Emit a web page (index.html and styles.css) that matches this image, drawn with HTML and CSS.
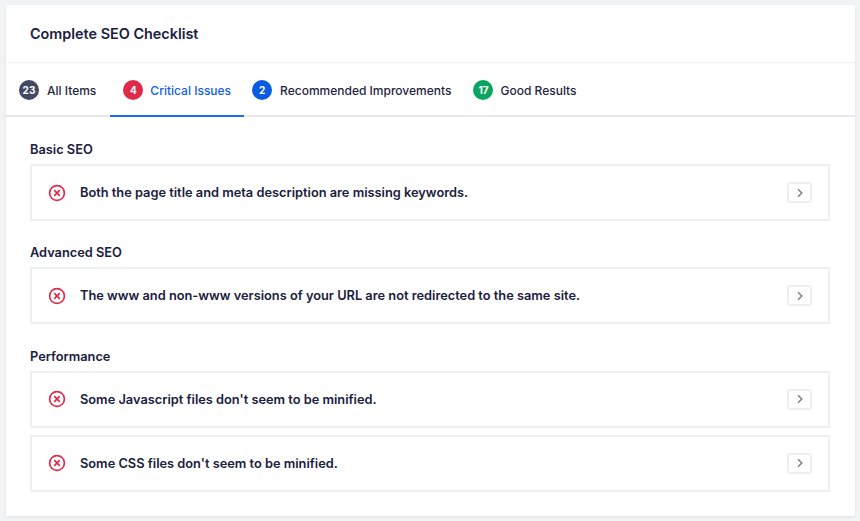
FILE: index.html
```html
<!DOCTYPE html>
<html lang="en">
<head>
<meta charset="utf-8">
<title>Complete SEO Checklist</title>
<link rel="stylesheet" href="styles.css">
</head>
<body>
<svg class="defs" width="0" height="0" aria-hidden="true">
  <symbol id="x-circle" viewBox="0 0 18 18">
    <circle cx="9" cy="9" r="7.4" fill="none" stroke="#df2a4a" stroke-width="1.7"/>
    <path d="M6.7 6.7l4.6 4.6M11.3 6.7l-4.6 4.6" fill="none" stroke="#df2a4a" stroke-width="1.7" stroke-linecap="round"/>
  </symbol>
  <symbol id="chev" viewBox="0 0 8 10">
    <path d="M2 1.2L5.8 5 2 8.8" fill="none" stroke="#7b7f8f" stroke-width="1.5"/>
  </symbol>
</svg>
<main class="card">
  <header class="card-head"><h1>Complete SEO Checklist</h1></header>
  <nav class="tabs">
    <div class="tab"><span class="badge badge-dark">23</span>All Items</div>
    <div class="tab tab-active"><span class="badge badge-red">4</span>Critical Issues</div>
    <div class="tab"><span class="badge badge-blue">2</span>Recommended Improvements</div>
    <div class="tab tab-last"><span class="badge badge-green">17</span>Good Results</div>
  </nav>
  <div class="content">
    <section class="group">
      <h2>Basic SEO</h2>
      <div class="row">
        <svg class="icon"><use href="#x-circle"/></svg>
        <span class="msg">Both the page title and meta description are missing keywords.</span>
        <span class="more"><svg class="chev"><use href="#chev"/></svg></span>
      </div>
    </section>
    <section class="group">
      <h2>Advanced SEO</h2>
      <div class="row">
        <svg class="icon"><use href="#x-circle"/></svg>
        <span class="msg">The www and non-www versions of your URL are not redirected to the same site.</span>
        <span class="more"><svg class="chev"><use href="#chev"/></svg></span>
      </div>
    </section>
    <section class="group">
      <h2>Performance</h2>
      <div class="row">
        <svg class="icon"><use href="#x-circle"/></svg>
        <span class="msg">Some Javascript files don't seem to be minified.</span>
        <span class="more"><svg class="chev"><use href="#chev"/></svg></span>
      </div>
      <div class="row">
        <svg class="icon"><use href="#x-circle"/></svg>
        <span class="msg">Some CSS files don't seem to be minified.</span>
        <span class="more"><svg class="chev"><use href="#chev"/></svg></span>
      </div>
    </section>
  </div>
</main>
</body>
</html>
```
FILE: styles.css
```css
* { box-sizing: border-box; }
html, body { margin: 0; height: 521px; overflow: hidden; }
body {
  background: #f2f3f5;
  padding: 5px 5px 5px 6px;
  font-family: Inter, "Liberation Sans", sans-serif;
  color: #1a2040;
}
.defs { position: absolute; }
.card {
  background: #fff;
  height: 511px;
  box-shadow: 0 1px 3px rgba(20, 27, 56, 0.08);
}
.card-head {
  height: 58px;
  padding-left: 24px;
  display: flex;
  align-items: center;
  border-bottom: 1px solid #f0f1f3;
}
h1 { margin: 0; font-size: 14.4px; font-weight: 600; }
.tabs {
  height: 54px;
  display: flex;
  border-bottom: 2px solid #e8e9ec;
}
.tab {
  display: flex;
  align-items: center;
  height: 54px;
  padding: 0 13px;
  font-size: 12px;
  font-weight: 500;
  color: #1f2540;
}
.tab + .tab { margin-left: -5px; }
.tab.tab-active {
  margin-left: 1px;
  color: #0f5fe6;
  border-top: 2px solid transparent;
  border-bottom: 2px solid #1a6cf0;
}
.tab.tab-last { margin-left: -4px; }
.badge {
  width: 20px;
  height: 20px;
  margin-right: 8px;
  border-radius: 50%;
  color: #fff;
  font-size: 10px;
  font-weight: 700;
  display: flex;
  align-items: center;
  justify-content: center;
}
.tab-active .badge, .tab-last .badge { margin-right: 7px; }
.badge-dark { background: #434960; }
.badge-red { background: #df2a4a; }
.badge-blue { background: #0a5be0; }
.badge-green { background: #09a55f; }
.content { padding: 24px 25px 0 24px; }
.group { margin-bottom: 23.4px; }
h2 {
  margin: 0 0 5px;
  height: 18px;
  line-height: 18px;
  font-size: 12.8px;
  font-weight: 600;
}
.row {
  height: 57px;
  display: flex;
  align-items: center;
  padding: 0 16px 0 16px;
  border: 2px solid #eeeff1;
  font-size: 12.8px;
  font-weight: 600;
}
.row + .row { margin-top: 7px; }
.icon { width: 18px; height: 18px; flex: none; }
.msg { flex: 1; margin-left: 14px; }
.more {
  width: 25px;
  height: 21px;
  border: 2px solid #eeeff1;
  border-radius: 3px;
  display: flex;
  align-items: center;
  justify-content: center;
}
.chev { width: 8px; height: 10px; }
```
